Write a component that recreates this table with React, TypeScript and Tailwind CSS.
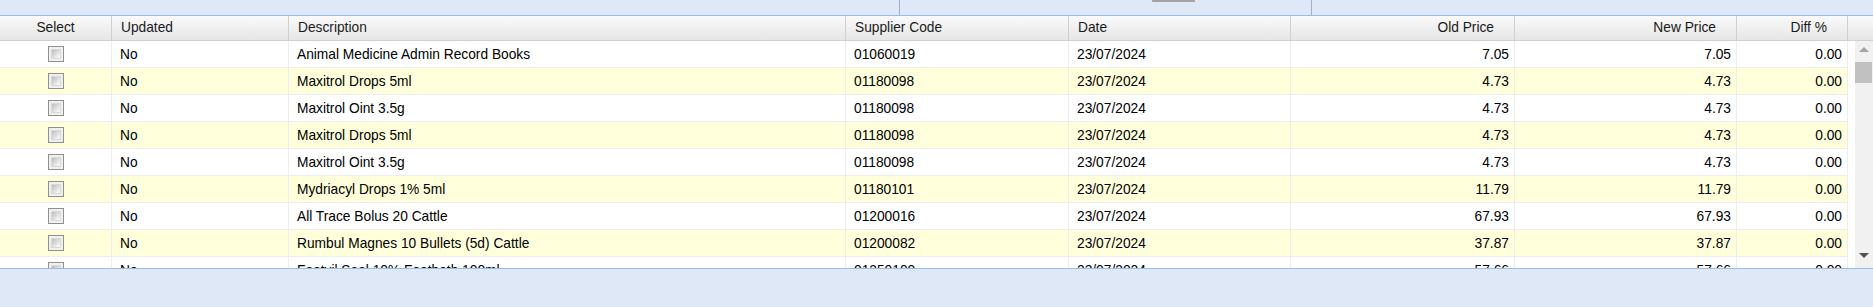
import React from "react";

const rows: [string, string, string, string][] = [
  ["Animal Medicine Admin Record Books", "01060019", "7.05", "7.05"],
  ["Maxitrol Drops 5ml", "01180098", "4.73", "4.73"],
  ["Maxitrol Oint 3.5g", "01180098", "4.73", "4.73"],
  ["Maxitrol Drops 5ml", "01180098", "4.73", "4.73"],
  ["Maxitrol Oint 3.5g", "01180098", "4.73", "4.73"],
  ["Mydriacyl Drops 1% 5ml", "01180101", "11.79", "11.79"],
  ["All Trace Bolus 20 Cattle", "01200016", "67.93", "67.93"],
  ["Rumbul Magnes 10 Bullets (5d) Cattle", "01200082", "37.87", "37.87"],
  ["Footvil Seal 10% Footbath 100ml", "01250100", "57.66", "57.66"],
];

function Checkbox() {
  return (
    <div className="w-[16px] h-[16px] border border-[#909090] bg-[#f0f0f0] p-[2px]">
      <div className="w-full h-full border border-[#d8d8d8] bg-linear-to-br from-[#bdbdbd] to-[#ffffff]" />
    </div>
  );
}

const hcell = "h-full shrink-0 flex items-center border-r border-[#d0d0d0]";
const bcell = "h-full shrink-0 flex items-center pt-[2px] border-r border-[#ededed]";

export default function App() {
  return (
    <div
      className="w-[1873px] h-[307px] bg-[#dfe8f6] flex flex-col overflow-hidden text-[13.75px] text-black"
      style={{ fontFamily: '"Liberation Sans", Arial, sans-serif' }}
    >
      {/* top toolbar remnant */}
      <div className="h-[16px] shrink-0 flex border-b border-[#99bbe8]">
        <div className="w-[900px] h-full border-r border-[#9fb0c8]" />
        <div className="w-[412px] h-full border-r border-[#9fb0c8] flex">
          <div className="ml-[252px] w-[43px] h-[2px] bg-[#a3a3a3] rounded-b-[1px]" />
        </div>
        <div className="flex-1" />
      </div>

      {/* header */}
      <div className="h-[25px] shrink-0 flex border-b border-[#d0d0d0] bg-linear-to-b from-[#fafafa] to-[#e6e6e6] text-[#1a1a1a]">
        <div className={`${hcell} w-[112px] justify-center`}>Select</div>
        <div className={`${hcell} w-[177px] pl-[9px]`}>Updated</div>
        <div className={`${hcell} w-[557px] pl-[9px]`}>Description</div>
        <div className={`${hcell} w-[223px] pl-[9px]`}>Supplier Code</div>
        <div className={`${hcell} w-[222px] pl-[9px]`}>Date</div>
        <div className={`${hcell} w-[224px] justify-end pr-[20px]`}>Old Price</div>
        <div className={`${hcell} w-[222px] justify-end pr-[20px]`}>New Price</div>
        <div className={`${hcell} w-[111px] justify-end pr-[20px]`}>Diff %</div>
        <div className="flex-1" />
      </div>

      {/* body */}
      <div className="h-[228px] shrink-0 flex bg-white border-b border-[#99bbe8] overflow-hidden">
        <div className="w-[1848px] shrink-0 flex flex-col">
          {rows.map((r, i) => (
            <div
              key={i}
              className={`h-[27px] shrink-0 flex border-b border-[#ededed] ${
                i % 2 === 1 ? "bg-[#ffffdc]" : "bg-white"
              }`}
            >
              <div className="h-full shrink-0 flex items-center justify-center border-r border-[#ededed] w-[112px]">
                <Checkbox />
              </div>
              <div className={`${bcell} w-[177px] pl-[8px]`}>No</div>
              <div className={`${bcell} w-[557px] pl-[8px]`}>{r[0]}</div>
              <div className={`${bcell} w-[223px] pl-[8px]`}>{r[1]}</div>
              <div className={`${bcell} w-[222px] pl-[8px]`}>23/07/2024</div>
              <div className={`${bcell} w-[224px] justify-end pr-[5px]`}>{r[2]}</div>
              <div className={`${bcell} w-[222px] justify-end pr-[5px]`}>{r[3]}</div>
              <div className={`${bcell} w-[111px] justify-end pr-[5px]`}>0.00</div>
            </div>
          ))}
        </div>
        <div className="w-[7px] shrink-0" />
        {/* scrollbar */}
        <div className="flex-1 bg-[#f1f1f1] flex flex-col">
          <div className="h-[17px] shrink-0 flex items-center justify-center">
            <svg width="10" height="6" viewBox="0 0 10 6">
              <polygon points="5,0 10,5 0,5" fill="#a3a3a3" />
            </svg>
          </div>
          <div className="mt-[4px] h-[21px] shrink-0 mr-[1px] bg-[#c1c1c1]" />
          <div className="flex-1" />
          <div className="h-[17px] shrink-0 flex items-center justify-center">
            <svg width="10" height="6" viewBox="0 0 10 6">
              <polygon points="0,0 10,0 5,5" fill="#505050" />
            </svg>
          </div>
          <div className="h-[4px] shrink-0" />
        </div>
      </div>

      <div className="flex-1" />
    </div>
  );
}
